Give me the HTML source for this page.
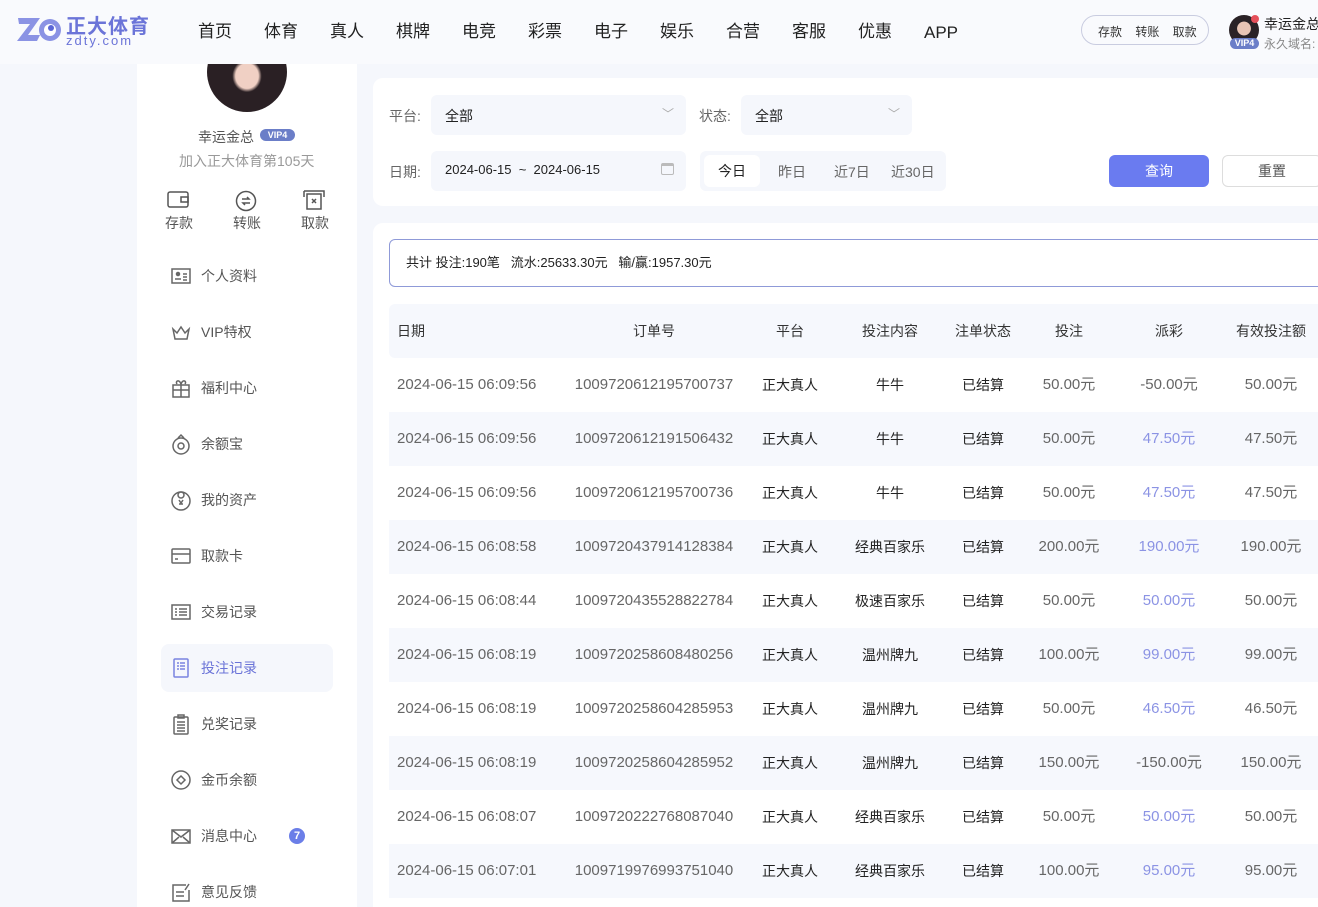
<!DOCTYPE html>
<html><head><meta charset="utf-8"><style>
*{margin:0;padding:0;box-sizing:border-box}
html,body{width:1318px;height:907px;overflow:hidden}
body{background:#f5f7fc;font-family:"Liberation Sans","Noto Sans CJK SC",sans-serif;color:#333;position:relative}
.hdr{position:absolute;left:0;top:0;width:1318px;height:64px;background:#f9fafd}
.nav{position:absolute;top:20px;font-size:17px;color:#222;line-height:24px;height:24px}
.side{position:absolute;left:137px;top:64px;width:220px;height:843px;background:#fff;overflow:hidden}
.main1{position:absolute;left:373px;top:78px;width:960px;height:128px;background:#fff;border-radius:10px}
.main2{position:absolute;left:373px;top:223px;width:960px;height:700px;background:#fff;border-radius:10px}
.abs{position:absolute;white-space:nowrap}
.mi{position:absolute;left:170px;font-size:14px;color:#555;display:flex;align-items:center}
.mi svg{width:22px;height:22px;margin-right:9px}
.sel{position:absolute;background:#f5f7fc;border-radius:6px;font-size:14px;color:#222}
.row{position:absolute;left:389px;width:940px;height:54px;font-size:14px;color:#666}
.row span{position:absolute;top:0;line-height:54px;white-space:nowrap}
.n{font-size:15px}
.c{transform:translateX(-50%)}
.alt{background:#f6f8fd}
.blue{color:#8b93e4}
</style></head><body>
<div class="hdr">
<svg class="abs" style="left:16px;top:15px" width="46" height="30" viewBox="0 0 46 30"><path d="M2 3h22l-12 17h12l-3 6H1l13-17H3z" fill="#8b93e4"/><circle cx="34" cy="15" r="11" fill="#8b93e4"/><circle cx="34" cy="15" r="6" fill="#fff"/><circle cx="35" cy="13" r="3" fill="#5b66d6"/></svg>
<div class="abs" style="left:66px;top:10px;font-size:20px;color:#6b74d8;font-weight:bold;letter-spacing:1px">正大体育</div>
<div class="abs" style="left:66px;top:33px;font-size:13px;color:#6b74d8;letter-spacing:2px">zdty.com</div>
<div class="nav" style="left:198px">首页</div><div class="nav" style="left:264px">体育</div><div class="nav" style="left:330px">真人</div><div class="nav" style="left:396px">棋牌</div><div class="nav" style="left:462px">电竞</div><div class="nav" style="left:528px">彩票</div><div class="nav" style="left:594px">电子</div><div class="nav" style="left:660px">娱乐</div><div class="nav" style="left:726px">合营</div><div class="nav" style="left:792px">客服</div><div class="nav" style="left:858px">优惠</div><div class="nav" style="left:924px;top:21px">APP</div>
<div class="abs" style="left:1081px;top:15px;width:128px;height:30px;border:1px solid #c9cce0;border-radius:15px;font-size:12px;color:#333;padding:7px 0 0 16px;word-spacing:10px">存款 转账 取款</div>
<div class="abs" style="left:1229px;top:15px;width:30px;height:30px;border-radius:50%;background:radial-gradient(circle at 50% 45%,#e8c4b4 0 30%,#2a2226 32%)"></div>
<div class="abs" style="left:1251px;top:15px;width:8px;height:8px;border-radius:50%;background:#e5505a"></div>
<div class="abs" style="left:1230px;top:38px;width:29px;height:11px;border-radius:6px;background:#6b7ec8;color:#fff;font-size:9px;text-align:center;line-height:11px;font-weight:bold">VIP4</div>
<div class="abs" style="left:1264px;top:14px;font-size:14px;color:#222">幸运金总</div>
<div class="abs" style="left:1264px;top:35px;font-size:12px;color:#888">永久域名:</div>
</div>
<div class="side">
<div class="abs" style="left:70px;top:-32px;width:80px;height:80px;border-radius:50%;background:radial-gradient(ellipse at 50% 55%,#f0d0c4 0 20%,#2a2024 26%)"></div>
<div class="abs" style="left:61px;top:63px;font-size:14px;color:#555">幸运金总</div>
<div class="abs" style="left:123px;top:65px;width:35px;height:12px;border-radius:6px;background:#6b7ec8;color:#fff;font-size:9px;text-align:center;line-height:12px;font-weight:bold">VIP4</div>
<div class="abs" style="left:42px;top:87px;font-size:14px;color:#999">加入正大体育第105天</div>
<svg class="abs" style="left:30px;top:126px" width="22" height="20" viewBox="0 0 22 20" fill="none" stroke="#555" stroke-width="1.5"><rect x="1" y="2" width="20" height="15" rx="2"/><path d="M14 7h7v5h-7z"/></svg>
<svg class="abs" style="left:98px;top:126px" width="22" height="22" viewBox="0 0 22 22" fill="none" stroke="#555" stroke-width="1.5"><circle cx="11" cy="11" r="9.5"/><path d="M7 9h7l-2-2M15 13H8l2 2"/></svg>
<svg class="abs" style="left:166px;top:125px" width="22" height="22" viewBox="0 0 22 22" fill="none" stroke="#555" stroke-width="1.5"><path d="M1 2h20v6M1 2v6M4 5h14v15H4z"/><path d="M9 10l4 4M13 10l-4 4"/></svg>
<div class="abs" style="left:28px;top:149px;font-size:14px;color:#555">存款</div>
<div class="abs" style="left:96px;top:149px;font-size:14px;color:#555">转账</div>
<div class="abs" style="left:164px;top:149px;font-size:14px;color:#555">取款</div>
<div class="abs" style="left:24px;top:580px;width:172px;height:48px;border-radius:8px;background:#f5f7fc"></div>
</div>
<div class="mi" style="top:265px"><svg viewBox="0 0 22 22" fill="none" stroke="#666" stroke-width="1.5"><rect x="2" y="4" width="18" height="14"/><circle cx="8" cy="9" r="1.5" fill="#666"/><path d="M5 14h6M13 9h4M13 12h4M13 15h4"/></svg>个人资料</div>
<div class="mi" style="top:321px"><svg viewBox="0 0 22 22" fill="none" stroke="#666" stroke-width="1.5"><path d="M3 8l4 4 4-6 4 6 4-4-2 10H5z"/></svg>VIP特权</div>
<div class="mi" style="top:377px"><svg viewBox="0 0 22 22" fill="none" stroke="#666" stroke-width="1.5"><rect x="3" y="8" width="16" height="12"/><path d="M3 13h16M11 6v14M11 7c-2-5-6-3-4 0M11 7c2-5 6-3 4 0"/></svg>福利中心</div>
<div class="mi" style="top:433px"><svg viewBox="0 0 22 22" fill="none" stroke="#666" stroke-width="1.5"><circle cx="11" cy="13" r="8"/><circle cx="11" cy="13" r="3"/><path d="M8 5l3-3 3 3"/></svg>余额宝</div>
<div class="mi" style="top:489px"><svg viewBox="0 0 22 22" fill="none" stroke="#666" stroke-width="1.5"><circle cx="11" cy="12" r="9"/><circle cx="11" cy="6" r="3"/><path d="M9 11l2 3 2-3M9 15h4"/></svg>我的资产</div>
<div class="mi" style="top:545px"><svg viewBox="0 0 22 22" fill="none" stroke="#666" stroke-width="1.5"><rect x="2" y="4" width="18" height="14" rx="1"/><path d="M2 9h18M5 14h3"/></svg>取款卡</div>
<div class="mi" style="top:601px"><svg viewBox="0 0 22 22" fill="none" stroke="#666" stroke-width="1.5"><rect x="2" y="4" width="18" height="14"/><path d="M5 8h2M9 8h8M5 11h2M9 11h8M5 14h2M9 14h8"/></svg>交易记录</div>
<div class="mi" style="top:657px;color:#6b74d8"><svg viewBox="0 0 22 22" fill="none" stroke="#7a84e0" stroke-width="1.5"><rect x="4" y="2" width="14" height="18" rx="1"/><path d="M7 6h2M10 6h5M7 9h2M10 9h5M7 12h2M10 12h5"/></svg>投注记录</div>
<div class="mi" style="top:713px"><svg viewBox="0 0 22 22" fill="none" stroke="#666" stroke-width="1.5"><rect x="4" y="4" width="14" height="17" rx="1"/><path d="M8 2h6v3H8zM7 9h8M7 12h8M7 15h8M7 18h8"/></svg>兑奖记录</div>
<div class="mi" style="top:769px"><svg viewBox="0 0 22 22" fill="none" stroke="#666" stroke-width="1.5"><circle cx="11" cy="11" r="9"/><path d="M11 7l4 4-4 4-4-4z"/></svg>金币余额</div>
<div class="mi" style="top:825px"><svg viewBox="0 0 22 22" fill="none" stroke="#666" stroke-width="1.5"><rect x="2" y="5" width="18" height="13"/><path d="M2 5l9 7 9-7M2 18l7-6M20 18l-7-6"/></svg>消息中心</div>
<div class="abs" style="left:289px;top:828px;width:16px;height:16px;border-radius:50%;background:#6b7ee8;color:#fff;font-size:11px;text-align:center;line-height:16px;font-weight:bold">7</div>
<div class="mi" style="top:881px"><svg viewBox="0 0 22 22" fill="none" stroke="#666" stroke-width="1.5"><path d="M16 4H3v16h16V9"/><path d="M6 11h8M6 15h8M15 9l4-6"/></svg>意见反馈</div>

<div class="main1"></div>
<div class="abs" style="left:389px;top:106px;font-size:14px;color:#666">平台:</div>
<div class="sel" style="left:431px;top:95px;width:255px;height:40px;padding:11px 14px">全部<span style="position:absolute;right:12px;top:10px;color:#aaa;font-size:12px">﹀</span></div>
<div class="abs" style="left:699px;top:106px;font-size:14px;color:#666">状态:</div>
<div class="sel" style="left:741px;top:95px;width:171px;height:40px;padding:11px 14px">全部<span style="position:absolute;right:12px;top:10px;color:#aaa;font-size:12px">﹀</span></div>
<div class="abs" style="left:389px;top:162px;font-size:14px;color:#666">日期:</div>
<div class="sel" style="left:431px;top:151px;width:255px;height:40px;padding:11px 14px;font-size:13px">2024-06-15 &nbsp;~&nbsp; 2024-06-15<span style="position:absolute;right:12px;top:12px;width:13px;height:12px;border:1.5px solid #bbb;border-top-width:3px;border-radius:2px"></span></div>
<div class="sel" style="left:700px;top:151px;width:246px;height:40px"></div>
<div class="abs" style="left:704px;top:155px;width:56px;height:32px;border-radius:6px;background:#fff;font-size:14px;color:#222;text-align:center;line-height:32px">今日</div>
<div class="abs" style="left:778px;top:162px;font-size:14px;color:#666">昨日</div>
<div class="abs" style="left:834px;top:162px;font-size:14px;color:#666">近7日</div>
<div class="abs" style="left:891px;top:162px;font-size:14px;color:#666">近30日</div>
<div class="abs" style="left:1109px;top:155px;width:100px;height:32px;border-radius:6px;background:#6a7bf0;color:#fff;font-size:14px;text-align:center;line-height:32px">查询</div>
<div class="abs" style="left:1222px;top:155px;width:100px;height:32px;border-radius:6px;border:1px solid #ddd;background:#fff;color:#555;font-size:14px;text-align:center;line-height:30px">重置</div>

<div class="main2"></div>
<div class="abs" style="left:389px;top:239px;width:940px;height:48px;border:1px solid #8f9ad8;border-radius:6px;font-size:13px;color:#222;padding:0 0 0 16px;line-height:46px;white-space:pre">共计 投注:190笔   流水:25633.30元   输/赢:1957.30元</div>
<div class="row alt" style="top:304px;height:54px;border-radius:6px;color:#333"><span style="left:8px">日期</span><span class="c" style="left:265px">订单号</span><span class="c" style="left:401px">平台</span><span class="c" style="left:501px">投注内容</span><span class="c" style="left:594px">注单状态</span><span class="c" style="left:680px">投注</span><span class="c" style="left:780px">派彩</span><span class="c" style="left:882px">有效投注额</span></div>
<div id="rows"></div>
<script>
var d=[["06:09:56","1009720612195700737","牛牛","50.00元","-50.00元","50.00元",0],
["06:09:56","1009720612191506432","牛牛","50.00元","47.50元","47.50元",1],
["06:09:56","1009720612195700736","牛牛","50.00元","47.50元","47.50元",1],
["06:08:58","1009720437914128384","经典百家乐","200.00元","190.00元","190.00元",1],
["06:08:44","1009720435528822784","极速百家乐","50.00元","50.00元","50.00元",1],
["06:08:19","1009720258608480256","温州牌九","100.00元","99.00元","99.00元",1],
["06:08:19","1009720258604285953","温州牌九","50.00元","46.50元","46.50元",1],
["06:08:19","1009720258604285952","温州牌九","150.00元","-150.00元","150.00元",0],
["06:08:07","1009720222768087040","经典百家乐","50.00元","50.00元","50.00元",1],
["06:07:01","1009719976993751040","经典百家乐","100.00元","95.00元","95.00元",1]];
var h="";d.forEach(function(r,i){h+='<div class="row'+(i%2?' alt':'')+'" style="top:'+(358+i*54)+'px"><span class="n" style="left:8px">2024-06-15 '+r[0]+'</span><span class="c n" style="left:265px">'+r[1]+'</span><span class="c" style="left:401px;color:#222">正大真人</span><span class="c" style="left:501px;color:#222">'+r[2]+'</span><span class="c" style="left:594px;color:#222">已结算</span><span class="c n" style="left:680px">'+r[3]+'</span><span class="c n'+(r[6]?' blue':'')+'" style="left:780px">'+r[4]+'</span><span class="c n" style="left:882px">'+r[5]+'</span></div>'});
document.getElementById("rows").innerHTML=h;
</script>
</body></html>
